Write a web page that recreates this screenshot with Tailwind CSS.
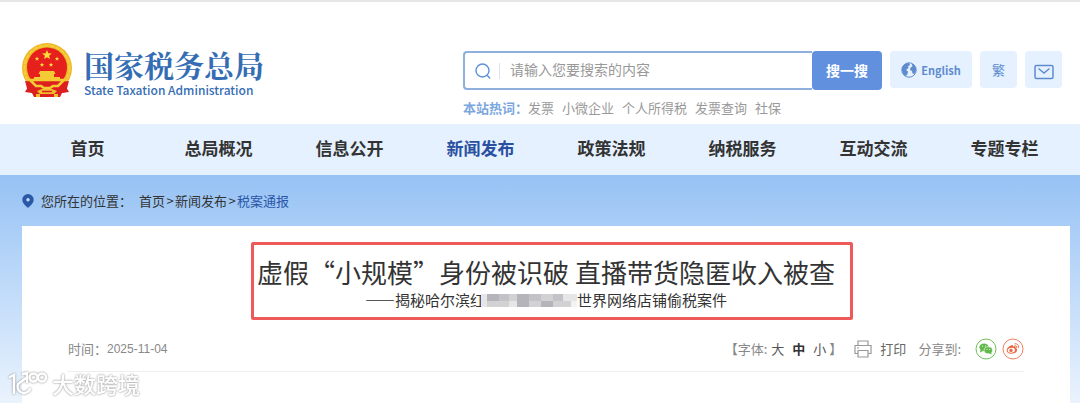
<!DOCTYPE html>
<html lang="zh-CN">
<head>
  <meta charset="UTF-8" />
  <meta name="viewport" content="width=device-width, initial-scale=1" />
  <title>国家税务总局 - 税案通报</title>
  <script src="https://cdn.jsdelivr.net/npm/@tailwindcss/browser@4"></script>
</head>
<body class="min-h-screen flex flex-col bg-white text-[#333] text-[13px] leading-5 font-['Noto_Sans_CJK_SC',sans-serif] overflow-hidden">
  <!-- Header -->
  <header class="flex justify-between items-start border-t-2 border-[#e6e6e6] pl-[22px] pr-[18px] h-[124px]">
    <a href="#" class="flex items-end gap-3 pt-10">
      <svg class="w-[50px] h-14 shrink-0" viewBox="0 0 50 56">
        <path d="M9 40 L3 50 L10 51 L12 55 H38 L40 51 L47 50 L41 40Z" fill="#dc1f1f" />
        <circle cx="25" cy="26" r="25" fill="#edb526" />
        <circle cx="25" cy="26" r="22.5" fill="none" stroke="#f5cd3a" stroke-width="2.500" stroke-dasharray="5 .7" />
        <circle cx="25" cy="25.500" r="20" fill="#e6201c" />
        <path d="M25 8l1.300 3.300 3.500.2-2.700 2.200.9 3.400-3-1.900-3 1.900.9-3.400-2.700-2.200 3.500-.2z" fill="#fbdc3c" />
        <g fill="#fbdc3c">
          <path id="star" d="M15 14.500l.6 1.500 1.600.1-1.200 1 .4 1.600-1.400-.9-1.400.9.4-1.600-1.200-1 1.600-.1z" />
          <use href="#star" x="20" />
          <use href="#star" x="5" y="6" />
          <use href="#star" x="14" y="6" />
        </g>
        <path d="M18 29h14l1.500 3H32v3h6v3H12v-3h6v-3h-1.500z" fill="#f5cb35" />
        <path d="M3 39c6 1 10-1 13-1h18c3 0 7 2 13 1l-3 11-9 1-4 4H19l-4-4-9-1z" fill="#dc1f1f" />
        <path d="M8 38h34l-6 6h-5l-3 2h-6l-3-2h-5z" fill="none" stroke="#f5cb35" stroke-width="2.600" />
        <path d="M15 49l5-2h10l5 2-3 3H18zM14 52h4v3h-4zM32 52h4v3h-4z" fill="#f0bd2c" />
        <path d="M20 49.500h10" stroke="#dc1f1f" stroke-width="1.500" />
      </svg>
      <span class="block text-[#356db5]">
        <span class="block text-[30px] leading-9 font-bold font-['Noto_Serif_CJK_SC','Noto_Sans_CJK_SC',serif]">国家税务总局</span>
        <span class="block text-xs leading-4 font-medium whitespace-nowrap">State Taxation Administration</span>
      </span>
    </a>

    <div class="w-[599px] pt-[49px]">
      <div class="flex items-start gap-2">
        <form class="flex grow h-[39px]">
          <label for="keyword" class="flex items-center pl-2.5 border-2 border-r-0 border-[#8fb0dc] rounded-l text-[#5f90dc]">
            <svg class="w-4 h-4" viewBox="0 0 16 16" fill="none" stroke="currentColor" stroke-width="1.400">
              <circle cx="7.500" cy="7.500" r="6.500" />
              <path d="M12 12l3 3.500" />
            </svg>
            <span class="ml-2 h-4 border-l border-[#dde3ea]"></span>
          </label>
          <input id="keyword" type="text" placeholder="请输入您要搜索的内容" class="grow min-w-0 border-y-2 border-[#8fb0dc] pl-2.5 pb-1 text-sm placeholder:text-[#999] outline-none" />
          <button type="button" class="w-[70px] pb-0.5 bg-[#6090de] text-white text-sm font-bold rounded">搜一搜</button>
        </form>
        <button type="button" class="flex items-center justify-center gap-1 w-[82px] h-[37px] rounded bg-[#e5f1ff] text-[#5f8ccf] text-[11px] font-bold">
          <svg class="w-4 h-4" viewBox="0 0 16 16">
            <circle cx="8" cy="8" r="7.200" fill="none" stroke="currentColor" />
            <path d="M1 6c1-3 4-5 7-5l1 2-2 1.500.5 1.500L5 8l2 1.500L6.500 12 5 14C2 13 .5 9 1 6zM10.500 1.500c3 1 5 4 4.500 7.500l-1.500 3-2-.5-.5-2.500-2-1 .5-2.500 2-1z" fill="currentColor" />
          </svg>
          English
        </button>
        <button type="button" class="w-[37px] h-[37px] rounded bg-[#e5f1ff] text-[#5f8ccf] text-[13px]">繁</button>
        <button type="button" aria-label="邮箱" class="flex items-center justify-center w-[37px] h-[37px] rounded bg-[#e5f1ff] text-[#5f8ccf]">
          <svg class="w-5 h-4 mt-1" viewBox="0 0 20 16" fill="none" stroke="currentColor" stroke-width="1.500">
            <rect x="1" y="1.500" width="18" height="13" rx="1.500" />
            <path d="M4.500 4.500L10 9l5.500-4.500" />
          </svg>
        </button>
      </div>
      <p class="flex gap-2 mt-2 text-[#999]">
        <strong class="text-[#7ba7de] -mr-2">本站热词：</strong>
        <a href="#">发票</a>
        <a href="#">小微企业</a>
        <a href="#">个人所得税</a>
        <a href="#">发票查询</a>
        <a href="#">社保</a>
      </p>
    </div>
  </header>

  <!-- Navigation -->
  <nav class="grid grid-cols-8 items-center h-[51px] pl-[22px] pr-2.5 pb-1 bg-[#e5f1ff] text-center text-[17px] font-bold">
    <a href="#">首页</a>
    <a href="#">总局概况</a>
    <a href="#">信息公开</a>
    <a href="#" class="text-[#2b50a0]">新闻发布</a>
    <a href="#">政策法规</a>
    <a href="#">纳税服务</a>
    <a href="#">互动交流</a>
    <a href="#">专题专栏</a>
  </nav>

  <main class="grow flex flex-col pl-[22px] pr-2.5 bg-linear-to-b from-[#96c2f4] to-[#eaf3fd]">
    <div class="flex items-center h-[51px]">
      <svg class="w-3 h-3.5 mr-[7px]" viewBox="0 0 12 14">
        <path d="M6 0a5.700 5.700 0 0 1 5.700 5.700C11.700 9 8.500 11.500 6 14 3.500 11.500.3 9 .3 5.700A5.700 5.700 0 0 1 6 0z" fill="#2b57a7" />
        <circle cx="6" cy="5.800" r="1.700" fill="#c4dcf8" />
      </svg>
      <span class="mr-[7px]">您所在的位置：</span>
      <a href="#">首页</a>
      <span class="w-2.5 text-center">&gt;</span>
      <a href="#">新闻发布</a>
      <span class="w-2.5 text-center">&gt;</span>
      <a href="#" class="text-[#2b57a7]">税案通报</a>
    </div>

    <!-- Article -->
    <article class="grow bg-white px-[46px] pt-7">
      <div class="relative w-fit mx-auto text-center">
        <h1 class="text-[26px] leading-9">虚假“小规模”身份被识破 直播带货隐匿收入被查</h1>
        <p class="flex justify-center items-center text-[15px] leading-5">
          <span>——揭秘哈尔滨红</span>
          <svg class="w-24 h-[13px] -ml-1" viewBox="0 0 96 13" preserveAspectRatio="none" shape-rendering="crispEdges">
            <rect width="96" height="13" fill="#d2d2d4" />
            <path d="M6 0h12v7H6zM36 0h12v13H36zM60 7h12v6H60z" fill="#b4b4ba" />
            <path d="M18 0h10v7H18zM48 0h12v7H48zM72 0h10v7H72z" fill="#c3c3c7" />
            <path d="M0 0h6v13H0zM28 7h8v6h-8zM82 0h14v7H82z" fill="#e6e6e7" />
            <path d="M90 7h6v6h-6z" fill="#f3f3f3" />
          </svg>
          <span>世界网络店铺偷税案件</span>
        </p>
        <div class="absolute -left-1.5 -right-[18px] -top-3 -bottom-2.5 border-3 border-[#ee5a5a] rounded-xs"></div>
      </div>

      <div class="flex items-center justify-between mt-5 h-[42px] pb-1 border-b border-[#eee] text-[#888]">
        <p class="flex items-center">时间：<time class="text-xs font-['Liberation_Sans',sans-serif]">2025-11-04</time></p>
        <div class="flex items-center">
          <span>【字体:</span>
          <button type="button" class="ml-1 text-[#555]">大</button>
          <button type="button" class="ml-2 text-[#333] font-bold">中</button>
          <button type="button" class="mx-2 -mr-px pr-1 text-[#555]">小</button>
          <span>】</span>
          <button type="button" class="flex items-center gap-2 ml-3 text-[#666]">
            <svg class="w-[18px] h-[18px]" viewBox="0 0 18 18" fill="none" stroke="#999" stroke-width="1.200">
              <path d="M4 5.500V1h10v4.500M4 13.500H1v-8h16v8h-3M4 10.500h10V17H4zM3 8h2" />
            </svg>
            打印
          </button>
          <span class="ml-3">分享到:</span>
          <a href="#" aria-label="微信" class="ml-3.5">
            <svg class="w-[22px] h-[22px]" viewBox="0 0 22 22">
              <circle cx="11" cy="11" r="10" fill="#fff" stroke="#72c15a" />
              <ellipse cx="9" cy="9.300" rx="4.600" ry="3.900" fill="#62b949" />
              <path d="M5.500 11.500L5 14.500l3-1.500z" fill="#62b949" />
              <ellipse cx="13.300" cy="12.300" rx="4.200" ry="3.500" fill="#62b949" stroke="#fff" stroke-width=".6" />
              <path d="M14 15.300l2.500 1.200-.3-2.200z" fill="#62b949" />
              <g fill="#fff"><circle cx="7.500" cy="8" r=".6" /><circle cx="10.600" cy="8" r=".6" /><circle cx="12" cy="11.500" r=".5" /><circle cx="14.700" cy="11.500" r=".5" /></g>
            </svg>
          </a>
          <a href="#" aria-label="微博" class="ml-[5px]">
            <svg class="w-[22px] h-[22px]" viewBox="0 0 22 22">
              <circle cx="11" cy="11" r="10" fill="#fff" stroke="#ee8061" />
              <path d="M9.500 7.200c1.200-.4 1.900.2 1.600 1.400 1.700-.6 3-.2 2.500 1.300 3 1 1.700 5.600-4 5.800-5.600.1-6.400-4.100-2.600-7.100.8-.7 1.700-1.200 2.500-1.400z" fill="#ea6a45" />
              <ellipse cx="9.300" cy="12.300" rx="3.700" ry="2.400" fill="#fff" transform="rotate(-8 9.300 12.300)" />
              <circle cx="9" cy="12.400" r="1.700" fill="#ea6a45" />
              <path d="M12.800 5.800c2.500-.5 4.300 1.400 3.600 4M13 7.700c1.200-.2 1.900.6 1.600 1.700" fill="none" stroke="#ea6a45" stroke-linecap="round" />
            </svg>
          </a>
        </div>
      </div>
    </article>
  </main>

  <!-- Watermark -->
  <div class="fixed left-2 bottom-1 flex items-center gap-1 text-white text-[22px] leading-8 font-medium [text-shadow:0_0_2px_#aaa,0_0_2px_#aaa]">
    <svg class="w-10 h-[26px] drop-shadow-[0_0_1px_#888]" viewBox="0 0 40 26" fill="none" stroke="#fff" stroke-width="2.400" stroke-linecap="round">
      <path d="M2 7l4-2v18M18 8l-8 6a6 6 0 0 0 12 5M15 4l4-1v9" />
      <circle cx="25.500" cy="7.500" r="4" />
      <circle cx="34" cy="7.500" r="4" />
    </svg>
    大数跨境
  </div>
</body>
</html>
